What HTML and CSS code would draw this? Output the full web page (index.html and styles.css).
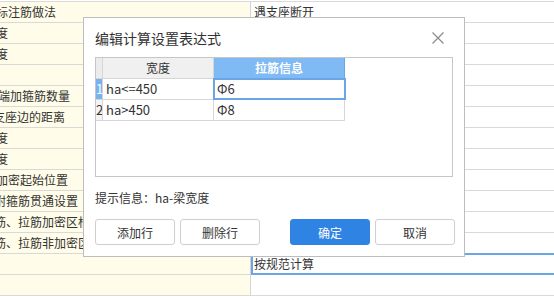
FILE: index.html
```html
<!DOCTYPE html>
<html lang="zh-CN">
<head>
<meta charset="utf-8">
<title>编辑计算设置表达式</title>
<link rel="stylesheet" href="styles.css">
</head>
<body>
<div class="sheet">
  <div class="row"><div class="lc"><span class="cut4">标注筋做法</span></div><div class="rc">遇支座断开</div></div>
  <div class="row"><div class="lc"><span class="cut4">度</span></div><div class="rc"></div></div>
  <div class="row"><div class="lc"><span class="cut4">度</span></div><div class="rc"></div></div>
  <div class="row"><div class="lc"></div><div class="rc"></div></div>
  <div class="row"><div class="lc"><span class="cut2">端加箍筋数量</span></div><div class="rc"></div></div>
  <div class="row"><div class="lc"><span class="cut7">支座边的距离</span></div><div class="rc"></div></div>
  <div class="row"><div class="lc"><span class="cut4">度</span></div><div class="rc"></div></div>
  <div class="row"><div class="lc"><span class="cut4">度</span></div><div class="rc"></div></div>
  <div class="row"><div class="lc"><span class="cut4">加密起始位置</span></div><div class="rc"></div></div>
  <div class="row"><div class="lc"><span class="cut6">附箍筋贯通设置</span></div><div class="rc"></div></div>
  <div class="row"><div class="lc"><span class="cut6">筋、拉筋加密区根数</span></div><div class="rc"></div></div>
  <div class="row"><div class="lc"><span class="cut6">筋、拉筋非加密区根数</span></div><div class="rc"></div></div>
  <div class="row"><div class="lc"></div><div class="rc selected">按规范计算</div></div>
  <div class="row"><div class="lc"></div><div class="rc"></div></div>
</div>

<div class="dialog">
  <div class="dlg-head">
    <div class="dlg-title">编辑计算设置表达式</div>
    <svg class="dlg-close" width="12" height="12" viewBox="0 0 12 12"><path d="M0.5 0.5 L11.5 11.5 M11.5 0.5 L0.5 11.5" stroke="#8a8a8a" stroke-width="1.2" fill="none"/></svg>
  </div>
  <div class="grid">
    <div class="grow ghead">
      <div class="num"></div>
      <div class="c1">宽度</div>
      <div class="c2 hl">拉筋信息</div>
    </div>
    <div class="grow">
      <div class="num cur">1</div>
      <div class="c1">ha&lt;=450</div>
      <div class="c2 sel">Φ6</div>
    </div>
    <div class="grow">
      <div class="num">2</div>
      <div class="c1">ha&gt;450</div>
      <div class="c2">Φ8</div>
    </div>
  </div>
  <div class="hint">提示信息：ha-梁宽度</div>
  <div class="btns">
    <div class="group">
      <button class="btn">添加行</button>
      <button class="btn">删除行</button>
    </div>
    <div class="group">
      <button class="btn primary">确定</button>
      <button class="btn">取消</button>
    </div>
  </div>
</div>
</body>
</html>
```

FILE: styles.css
```css
html, body {
  margin: 0;
  padding: 0;
  width: 554px;
  height: 296px;
  overflow: hidden;
  background: #ffffff;
  font-family: "Noto Sans CJK SC", "Noto Sans", sans-serif;
  color: #333333;
}

.sheet {
  margin-top: 1px;
  border-top: 1px solid #d9d9d9;
}

.row {
  display: flex;
  height: 20px;
  border-bottom: 1px solid #d9d9d9;
  font-size: 12px;
  line-height: 20px;
}

.lc {
  width: 250px;
  flex: none;
  background: #fffde9;
  border-right: 1px solid #d4d4d4;
  overflow: hidden;
  white-space: nowrap;
}

.rc {
  flex: 1;
  padding-left: 3px;
  white-space: nowrap;
}

.rc.selected {
  position: relative;
}

.rc.selected::after {
  content: "";
  position: absolute;
  left: 0;
  top: -1px;
  right: 0;
  bottom: -1px;
  border: 2px solid #6aa6e6;
  border-right: none;
}

.cut2 { margin-left: -2px; }
.cut4 { margin-left: -4px; }
.cut6 { margin-left: -6px; }
.cut7 { margin-left: -7px; }

.dialog {
  position: absolute;
  left: 83px;
  top: 17px;
  width: 382px;
  height: 240px;
  box-sizing: border-box;
  background: #ffffff;
  border: 1px solid #bdbdbd;
  padding: 0 9px 11px 11px;
  display: flex;
  flex-direction: column;
}

.dlg-head {
  height: 39px;
  display: flex;
  align-items: center;
  justify-content: space-between;
  padding-right: 11px;
}

.dlg-title {
  font-size: 14px;
  color: #333333;
}

.dlg-close {
  display: block;
  margin-top: 0;
}

.grid {
  width: 358px;
  height: 120px;
  box-sizing: border-box;
  border: 1px solid #c6c6c6;
  font-size: 12px;
}

.grow {
  display: flex;
  height: 20px;
  line-height: 20px;
  width: 249px;
  border-bottom: 1px solid #d6d6d6;
}

.num {
  width: 6px;
  flex: none;
  border-right: 1px solid #d6d6d6;
  overflow: hidden;
  font-size: 13px;
  color: #333333;
  background: #f4f4f4;
}

.num.cur {
  background: #78b3ef;
  color: #ffffff;
}

.c1 {
  width: 107px;
  flex: none;
  padding-left: 3px;
  border-right: 1px solid #d6d6d6;
  font-size: 13px;
  white-space: nowrap;
}

.c2 {
  width: 127px;
  flex: none;
  padding-left: 3px;
  border-right: 1px solid #d6d6d6;
  font-size: 13px;
  white-space: nowrap;
  position: relative;
}

.ghead .num {
  background: #ececec;
}

.ghead .c1 {
  background: #f0f0f0;
  text-align: center;
  font-size: 12px;
  padding-left: 0;
  width: 110px;
}

.ghead .c2 {
  background: #80baf5;
  color: #ffffff;
  font-weight: bold;
  text-align: center;
  font-size: 12px;
  padding-left: 0;
  width: 130px;
  border-right-color: #6aa6e6;
}

.c2.sel::after {
  content: "";
  position: absolute;
  left: -1px;
  top: -1px;
  right: -2px;
  bottom: -1px;
  border: 2px solid #6aa6e6;
}

.hint {
  height: 42px;
  line-height: 42px;
  font-size: 12px;
  color: #333333;
}

.btns {
  display: flex;
  justify-content: space-between;
  height: 26px;
}

.group {
  display: flex;
  gap: 5px;
}

.btn {
  width: 80px;
  height: 26px;
  box-sizing: border-box;
  border: 1px solid #cfcfcf;
  border-radius: 3px;
  background: #ffffff;
  color: #333333;
  font-family: "Noto Sans CJK SC", "Noto Sans", sans-serif;
  font-size: 12px;
  padding: 0;
}

.btn.primary {
  background: #2f84e3;
  border-color: #2f84e3;
  color: #ffffff;
}
```
